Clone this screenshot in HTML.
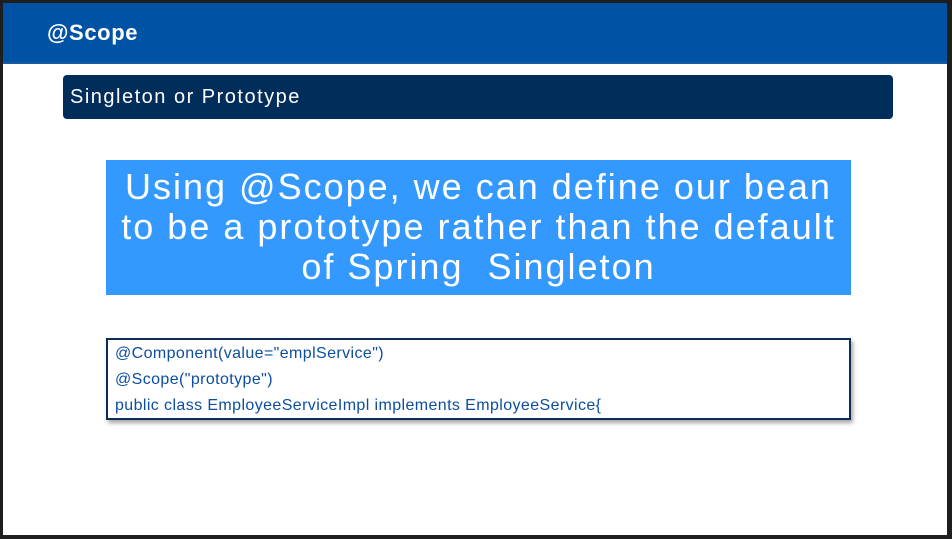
<!DOCTYPE html>
<html><head><meta charset="utf-8"><style>
html,body{margin:0;padding:0;}
body{width:952px;height:539px;background:#1e1e1e;position:relative;overflow:hidden;font-family:"Liberation Sans",sans-serif;}
.slide{position:absolute;left:3px;top:3px;width:944px;height:532px;background:#fff;}
.hdr{position:absolute;left:0;top:0;width:944px;height:59px;background:#0052a5;border-bottom:2px solid #1a5aa0;}
.hdr span{position:absolute;left:44px;top:17px;color:#fff;font-weight:bold;font-size:22px;letter-spacing:0.6px;}
.sub{position:absolute;left:60px;top:72px;width:830px;height:44px;background:#002d5a;border-radius:4px;}
.sub span{position:absolute;left:7px;top:11px;color:#fff;font-size:20px;letter-spacing:1.5px;}
.big{position:absolute;left:103px;top:157px;width:745px;height:135px;background:#3399ff;color:#fff;text-align:center;font-size:36px;line-height:40px;padding-top:7px;box-sizing:border-box;letter-spacing:2px;white-space:nowrap;}
.code{position:absolute;left:103px;top:335px;width:745px;height:82px;border:2px solid #0d2d55;box-sizing:border-box;box-shadow:2px 3px 4px rgba(0,0,0,.35);color:#0b4ea2;font-size:16px;letter-spacing:0.4px;line-height:26px;padding:1px 0 0 7px;}
</style></head><body>
<div class="slide">
<div class="hdr"><span>@Scope</span></div>
<div class="sub"><span>Singleton or Prototype</span></div>
<div class="big">Using @Scope, we can define our bean<br>to be a prototype rather than the default<br>of Spring&nbsp; Singleton</div>
<div class="code">@Component(value="emplService")<br>@Scope("prototype")<br>public class EmployeeServiceImpl implements EmployeeService{</div>
</div>
</body></html>
